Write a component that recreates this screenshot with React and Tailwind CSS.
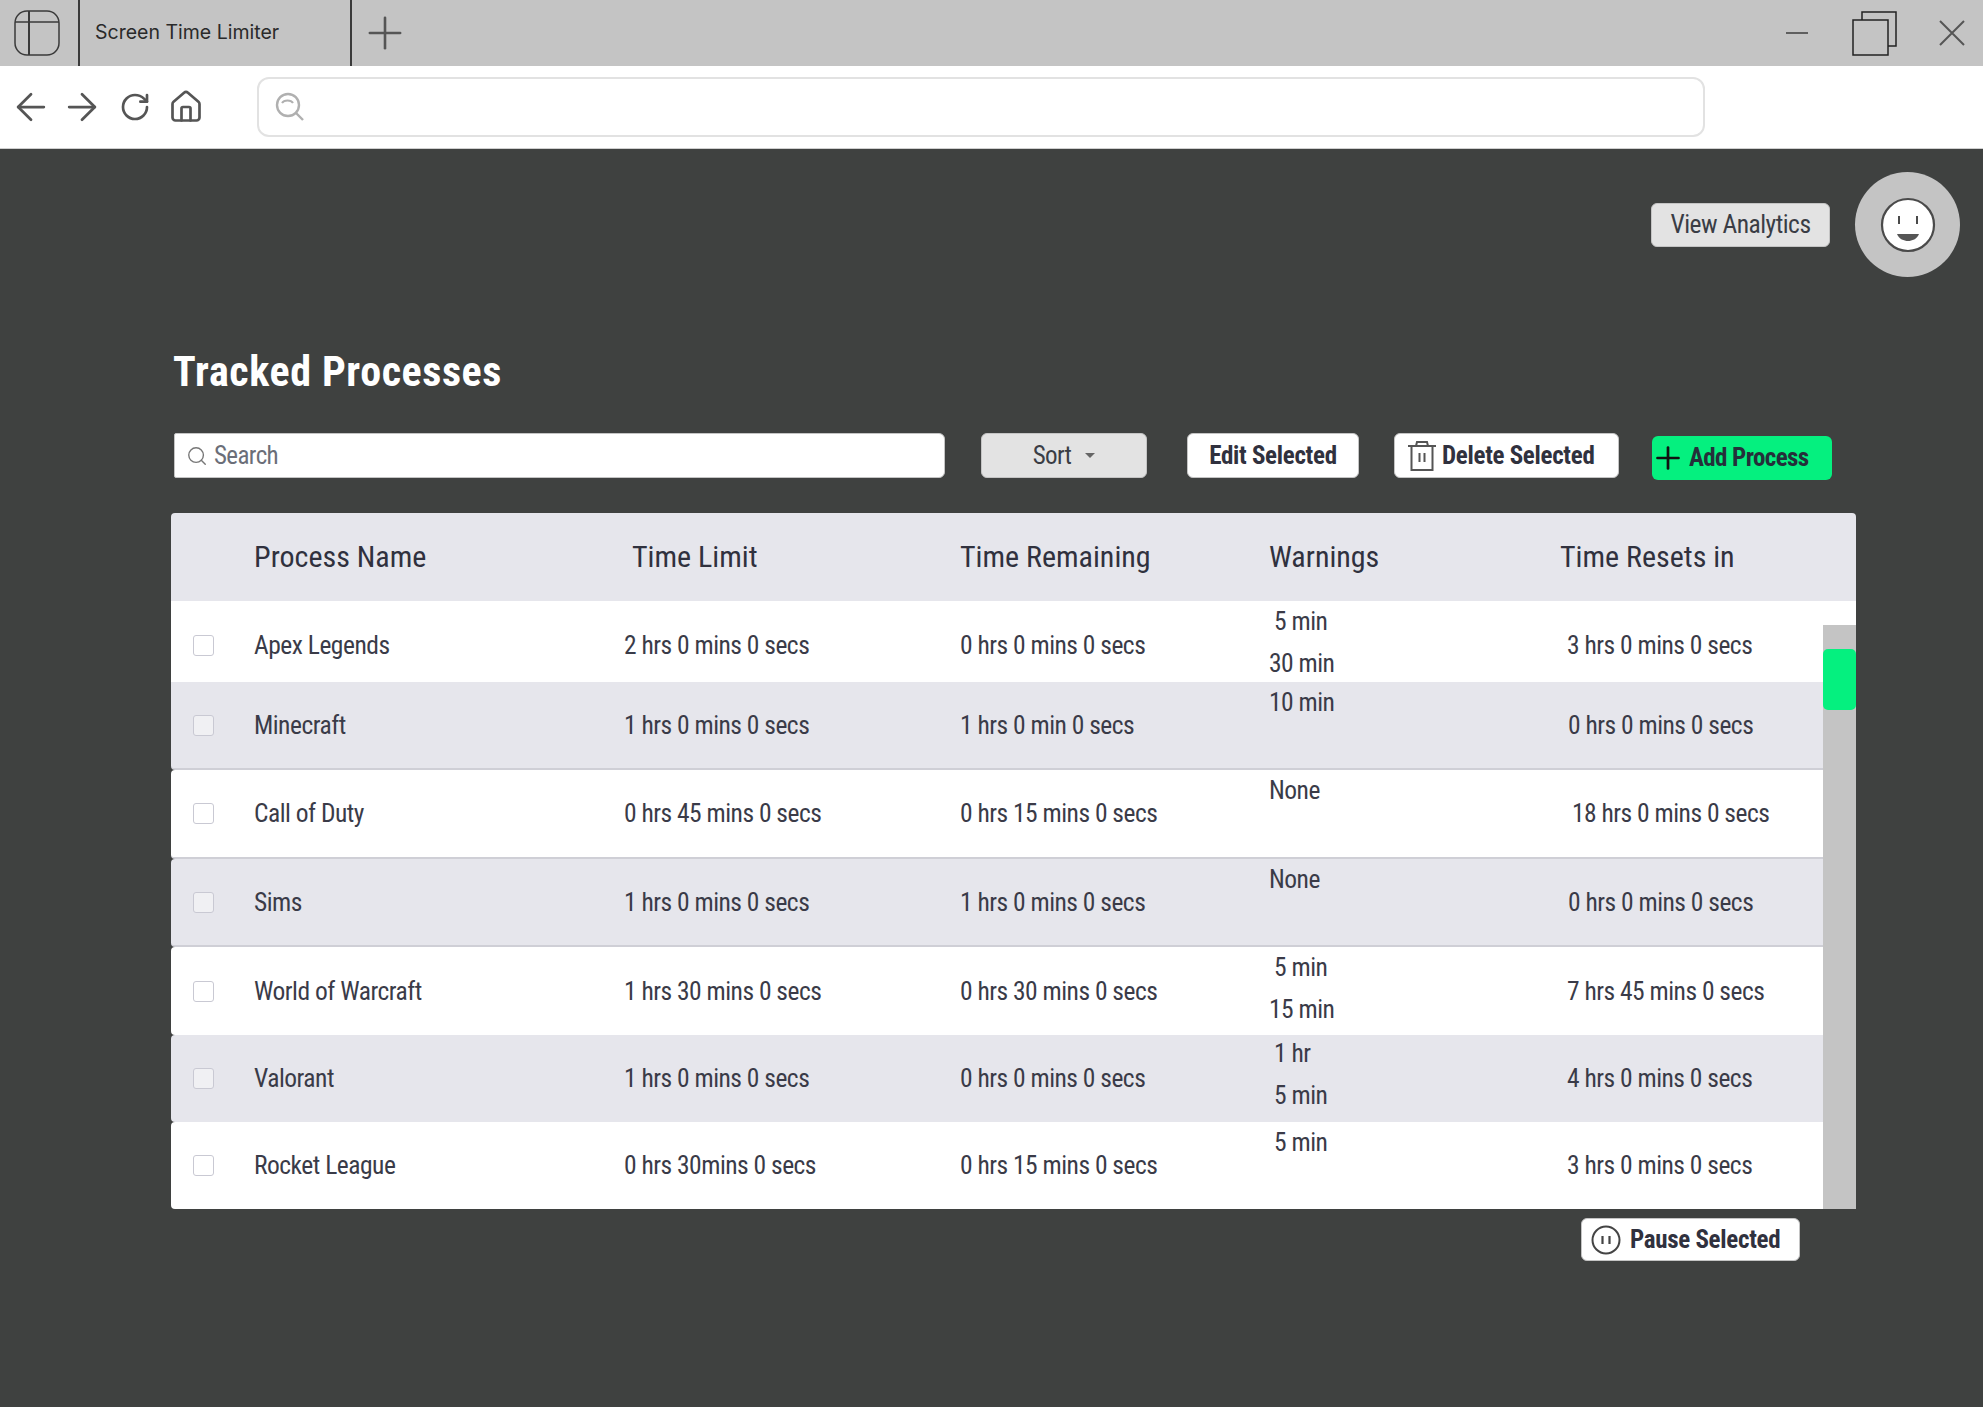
import React from 'react';
import { ArrowLeft, ArrowRight, RotateCw, House, Search, Plus } from 'lucide-react';

const rows = [
  { name: 'Apex Legends', limit: '2 hrs 0 mins 0 secs', remaining: '0 hrs 0 mins 0 secs', warnings: ['5 min', '30 min'], indent: [true, false], resets: '3 hrs 0 mins 0 secs', resetClass: 'pl-[7px]', h: 'h-[81px] rounded-none', shift: 'mt-[6px]' },
  { name: 'Minecraft', limit: '1 hrs 0 mins 0 secs', remaining: '1 hrs 0 min 0 secs', warnings: ['10 min'], indent: [false], resets: '0 hrs 0 mins 0 secs', resetClass: 'pl-[8px]', h: 'h-[88px] rounded-bl-[4px]', alt: true, line: true },
  { name: 'Call of Duty', limit: '0 hrs 45 mins 0 secs', remaining: '0 hrs 15 mins 0 secs', warnings: ['None'], indent: [false], resets: '18 hrs 0 mins 0 secs', resetClass: 'pl-[12px]', h: 'h-[89px] rounded-l-[4px]', line: true },
  { name: 'Sims', limit: '1 hrs 0 mins 0 secs', remaining: '1 hrs 0 mins 0 secs', warnings: ['None'], indent: [false], resets: '0 hrs 0 mins 0 secs', resetClass: 'pl-[8px]', h: 'h-[88px] rounded-l-[4px]', alt: true, line: true },
  { name: 'World of Warcraft', limit: '1 hrs 30 mins 0 secs', remaining: '0 hrs 30 mins 0 secs', warnings: ['5 min', '15 min'], indent: [true, false], resets: '7 hrs 45 mins 0 secs', resetClass: 'pl-[7px]', h: 'h-[88px] rounded-l-[4px]' },
  { name: 'Valorant', limit: '1 hrs 0 mins 0 secs', remaining: '0 hrs 0 mins 0 secs', warnings: ['1 hr', '5 min'], indent: [true, true], resets: '4 hrs 0 mins 0 secs', resetClass: 'pl-[7px]', h: 'h-[87px] rounded-l-[4px]', alt: true, warnShift: '-mt-[3px]' },
  { name: 'Rocket League', limit: '0 hrs 30mins 0 secs', remaining: '0 hrs 15 mins 0 secs', warnings: ['5 min'], indent: [true], resets: '3 hrs 0 mins 0 secs', resetClass: 'pl-[7px]', h: 'h-[87px] rounded-l-[4px] rounded-br-[4px]' },
];

const gridCols = 'grid grid-cols-[83px_370px_336px_309px_291px_1fr] items-center';

const TabLogo = () => (
  <svg width="46" height="46" viewBox="0 0 46 46" fill="none" stroke="#3a3a3a" strokeWidth="1.5">
    <rect x="1" y="1" width="44" height="44" rx="12" />
    <path d="M1 12H45" />
    <path d="M15 1V45" strokeWidth="2" />
  </svg>
);

const AddressSearch = () => (
  <svg width="30" height="30" viewBox="0 0 30 30" fill="none" stroke="#b0b0b0" strokeWidth="2.4">
    <circle cx="13" cy="13" r="11" />
    <path d="M21 21L28 28" />
    <path d="M7 11C9 7.5 16 7.5 18 11" strokeWidth="2" />
  </svg>
);

const Smiley = () => (
  <svg width="56" height="56" viewBox="0 0 56 56" fill="none">
    <circle cx="28" cy="28" r="26" fill="#fff" stroke="#4a4a4a" strokeWidth="2.2" />
    <path d="M19 19V27M37 19V27" stroke="#4a4a4a" strokeWidth="2" />
    <path d="M17 37H39C37 42 32 44 28 44C24 44 19 42 17 37Z" fill="#555" />
  </svg>
);

const TrashIcon = () => (
  <svg width="30" height="32" viewBox="0 0 30 32" fill="none" stroke="#555" strokeWidth="2">
    <path d="M1 6H29" />
    <path d="M9 6L10 2H20L21 6" />
    <path d="M4.5 6V30H25.5V6" />
    <path d="M12.5 13V22M17.5 13V22" />
  </svg>
);

const PauseIcon = () => (
  <svg width="30" height="30" viewBox="0 0 30 30" fill="none" stroke="#444">
    <circle cx="15" cy="15" r="13.5" strokeWidth="2" />
    <path d="M11.5 11V19M18.5 11V19" strokeWidth="2.2" />
  </svg>
);

const App = () => {
  return (
    <div className="flex flex-col min-h-[1407px] bg-[#3f4140] font-['Roboto',sans-serif] [font-stretch:75%] text-[#30313e]">
      {/* Browser tab strip */}
      <div className="flex items-center h-[66px] bg-[#c4c4c4] pl-[14px]">
        <TabLogo />
        <div className="ml-[18px] w-[274px] h-[66px] flex items-center pl-[15px] border-x-2 border-[#3a3a3a] font-['Inter',sans-serif] [font-stretch:100%] text-[19.5px] text-[#2a2a2a]">
          Screen Time Limiter
        </div>
        <Plus size={52} strokeWidth={1.2} color="#555" className="ml-[7px]" />
        <div className="ml-auto flex items-center pr-[18px]">
          <div className="w-[22px] h-[2.5px] bg-[#5f5f5f]" />
          <svg width="46" height="46" viewBox="0 0 46 46" fill="none" stroke="#222" strokeWidth="1.5" className="ml-[44px]">
            <path d="M10 10V2H44V36H36" />
            <rect x="1" y="10" width="35" height="35" />
          </svg>
          <svg width="26" height="26" viewBox="0 0 26 26" fill="none" stroke="#555" strokeWidth="2" className="ml-[41px]">
            <path d="M1 1L25 25M25 1L1 25" />
          </svg>
        </div>
      </div>

      {/* Browser address bar */}
      <div className="flex items-center h-[83px] bg-white border-b border-[#cfcfcf] pl-[9px]">
        <ArrowLeft size={44} strokeWidth={1.5} color="#555" />
        <ArrowRight size={44} strokeWidth={1.5} color="#555" className="ml-[7px]" />
        <RotateCw size={32} strokeWidth={2} color="#555" className="ml-[15px]" />
        <House size={36} strokeWidth={1.8} color="#555" className="ml-[17px]" />
        <div className="ml-[53px] w-[1448px] h-[60px] flex items-center pl-[16px] rounded-[12px] border-2 border-[#e2e2e2]">
          <AddressSearch />
        </div>
      </div>

      <div className="flex flex-col pl-[171px] pr-[127px]">
        {/* Analytics + avatar */}
        <div className="flex items-center justify-end h-[105px] mt-[23px] -mr-[104px]">
          <button className="w-[179px] h-[44px] rounded-[6px] bg-[#e3e3e3] border border-[#c4c4c4] text-[25.5px] tracking-[-0.5px] text-[#3a3d45] whitespace-nowrap">View Analytics</button>
          <div className="ml-[25px] w-[105px] h-[105px] rounded-full bg-[#c4c4c4] flex items-center justify-center">
            <Smiley />
          </div>
        </div>

        <h1 className="mt-[69px] ml-[2px] text-[42px] leading-[52px] font-bold tracking-[0.6px] text-white">Tracked Processes</h1>

        {/* Toolbar */}
        <div className="flex items-start mt-[35px] h-[46px]">
          <div className="ml-[3px] w-[771px] h-[45px] flex items-center gap-[6px] pl-[11px] rounded-r-[6px] rounded-l-[2px] bg-white border border-[#c4c4c4] text-[25px] tracking-[-0.6px] text-[#6b6e78]">
            <Search size={22} strokeWidth={1.5} color="#777" />
            Search
          </div>
          <button className="ml-[36px] w-[166px] h-[45px] flex items-center justify-center gap-[14px] rounded-[6px] bg-[#e3e3e3] border border-[#c4c4c4] text-[25px] tracking-[-0.6px] text-[#3a3d45]">
            Sort
            <span className="w-0 h-0 border-x-[5px] border-x-transparent border-t-[5px] border-t-[#666]" />
          </button>
          <button className="ml-[40px] w-[172px] h-[45px] rounded-[6px] bg-white border border-[#c4c4c4] text-[25px] tracking-[-0.3px] font-bold whitespace-nowrap">Edit Selected</button>
          <button className="ml-[35px] w-[225px] h-[45px] flex items-center pl-[12px] gap-[5px] rounded-[6px] bg-white border border-[#c4c4c4] text-[25px] tracking-[-0.3px] font-bold whitespace-nowrap">
            <TrashIcon />
            Delete Selected
          </button>
          <button className="ml-[33px] mt-[3px] w-[180px] h-[44px] flex items-center rounded-[6px] bg-[#05f07f] text-[25px] tracking-[-0.6px] font-bold text-[#24303a] whitespace-nowrap">
            <Plus size={36} strokeWidth={1.8} color="#111" className="-ml-[2px] mr-[3px]" />
            Add Process
          </button>
        </div>

        {/* Table */}
        <div className="relative mt-[34px]">
          <div className={`${gridCols} h-[88px] pb-[2px] rounded-t-[4px] bg-[#e6e6ec] text-[30px]`}>
            <span />
            <span>Process Name</span>
            <span className="pl-[8px]">Time Limit</span>
            <span>Time Remaining</span>
            <span>Warnings</span>
            <span>Time Resets in</span>
          </div>
          {rows.map((row) => (
            <div key={row.name} className={`${gridCols} ${row.h} pr-[33px] text-[25.5px] tracking-[-0.5px] text-[#3a3b48] ${row.alt ? 'bg-[#e6e6ec]' : 'bg-white'} ${row.line ? 'border-b-2 border-[#cfcfd6]' : ''}`}>
              <span className={`ml-[22px] w-[21px] h-[21px] rounded-[3px] border border-[#c9c9d3] bg-white/40 ${row.shift || ''}`} />
              <span className={row.shift}>{row.name}</span>
              <span className={row.shift}>{row.limit}</span>
              <span className={row.shift}>{row.remaining}</span>
              <div className={`self-start flex flex-col ${row.warnShift || '-mt-[1px]'}`}>
                {row.warnings.map((w, i) => (
                  <span key={w} className={`leading-[42px] ${row.indent[i] ? 'pl-[5px]' : ''}`}>{w}</span>
                ))}
              </div>
              <span className={`${row.resetClass} ${row.shift || ''}`}>{row.resets}</span>
            </div>
          ))}
          {/* Scrollbar */}
          <div className="absolute right-0 bottom-0 w-[33px] h-[584px] bg-[#c4c4c4]">
            <div className="mt-[24px] h-[61px] rounded-[5px] bg-[#05f07f]" />
          </div>
        </div>

        <div className="flex justify-end mt-[9px] pr-[56px]">
          <button className="w-[219px] h-[43px] flex items-center pl-[9px] gap-[9px] rounded-[6px] bg-white border border-[#c4c4c4] text-[25px] tracking-[-0.3px] font-bold whitespace-nowrap">
            <PauseIcon />
            Pause Selected
          </button>
        </div>
      </div>
    </div>
  );
};

export default App;
